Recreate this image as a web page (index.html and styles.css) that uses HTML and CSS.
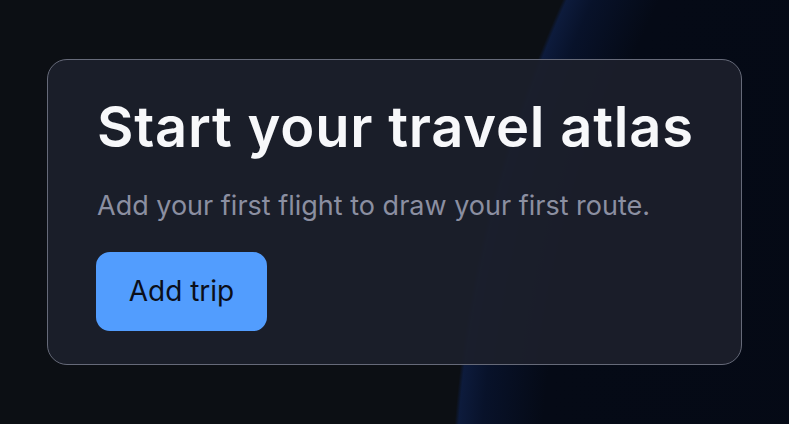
FILE: index.html
```html
<!DOCTYPE html>
<html lang="en">
<head>
<meta charset="utf-8">
<title>Start your travel atlas</title>
<link rel="stylesheet" href="styles.css">
</head>
<body>
<main class="stage">
  <section class="card">
    <h1 class="card-title">Start your travel atlas</h1>
    <p class="card-text">Add your first flight to draw your first route.</p>
    <button class="btn-primary" type="button">Add trip</button>
  </section>
</main>
</body>
</html>
```

FILE: styles.css
```css
* { box-sizing: border-box; }

html, body {
  margin: 0;
  height: 100%;
}

body {
  font-family: Inter, "Noto Sans", "Liberation Sans", sans-serif;
  background-color: #0c0f14;
  background-image:
    radial-gradient(circle 1268px at 1719px 520px,
      #040813 0,
      #050a16 1180px,
      #08122a 1240px,
      #0d1b3c 1264px,
      rgba(12, 15, 20, 0) 1268px);
  overflow: hidden;
}

.stage {
  height: 100%;
  display: flex;
  align-items: center;
  justify-content: center;
}

.card {
  width: 695px;
  padding: 37px 49px 33px;
  border: 1px solid #666a79;
  border-radius: 20px;
  background: rgba(28, 31, 43, 0.93);
  display: flex;
  flex-direction: column;
  align-items: flex-start;
}

.card-title {
  margin: 0;
  font-size: 56px;
  line-height: 1.1;
  font-weight: 600;
  letter-spacing: 0.8px;
  color: #f7f8fa;
  white-space: nowrap;
}

.card-text {
  margin: 29px 0 0;
  font-size: 27px;
  line-height: 1.3;
  color: #8b8fa1;
  white-space: nowrap;
}

.btn-primary {
  margin-top: 29px;
  margin-left: -1px;
  font-family: inherit;
  font-size: 28px;
  font-weight: 400;
  color: #0b0f1a;
  background: #529dfe;
  border: 0;
  border-radius: 14px;
  padding: 0;
  width: 171px;
  height: 79px;
}
```
